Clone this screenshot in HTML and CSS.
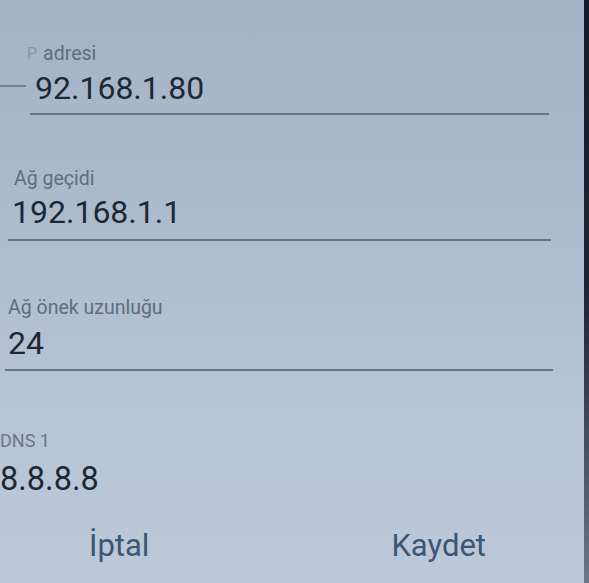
FILE: index.html
```html
<!DOCTYPE html>
<html lang="tr">
<head>
  <meta charset="UTF-8">
  <title>IP ayarları</title>
  <link rel="stylesheet" href="styles.css">
</head>
<body>
  <div class="screen">
    <div class="form">
      <!-- IP address -->
      <div class="field field-ip">
        <div class="label"><span class="cut">P</span><span>adresi</span></div>
        <div class="value">92.168.1.80</div>
      </div>

      <div class="field field-gw">
        <div class="label">Ağ geçidi</div>
        <div class="value">192.168.1.1</div>
      </div>

      <div class="field field-prefix">
        <div class="label">Ağ önek uzunluğu</div>
        <div class="value">24</div>
      </div>

      <div class="field field-dns">
        <div class="label">DNS 1</div>
        <div class="value">8.8.8.8</div>
      </div>
    </div>

    <div class="actions">
      <button class="btn btn-cancel">İptal</button>
      <button class="btn btn-save">Kaydet</button>
    </div>
  </div>
</body>
</html>
```

FILE: styles.css
```css
html, body {
  margin: 0;
  height: 100%;
}

body {
  font-family: Roboto, "Noto Sans", sans-serif;
  background: linear-gradient(180deg, #a3b2c5 0%, #adbccd 40%, #b8c5d6 75%, #bcc8d8 100%);
  overflow: hidden;
}

.screen {
  position: relative;
  height: 583px;
  box-sizing: border-box;
  padding-top: 43px;
}

/* dark bezel on the right edge */
.screen::after {
  content: "";
  position: absolute;
  top: 0;
  right: 0;
  width: 5px;
  height: 100%;
  background: linear-gradient(180deg, #151b28 0%, #1d2433 50%, #6c7788 100%);
}

.form {
  display: flex;
  flex-direction: column;
}

.field {
  position: relative;
  display: flex;
  flex-direction: column;
  border-bottom: 2px solid #687585;
  padding-bottom: 7px;
}

.label {
  display: flex;
  gap: 6px;
  font-size: 19.5px;
  line-height: 22px;
  color: #5f6d7e;
}

.label .cut {
  color: #8a97a6;
  font-size: 16px;
  margin-left: -3px;
}

.value {
  font-size: 32px;
  line-height: 36px;
  color: #1e2833;
  margin-top: 5px;
}

.field-ip {
  margin-left: 30px;
  width: 519px;
}

.field-ip .value {
  padding-left: 5px;
}

/* stray edge of the previous line, left of the first field */
.field-ip::before {
  content: "";
  position: absolute;
  left: -30px;
  top: 42px;
  width: 26px;
  height: 2px;
  background: #76838f;
}

.field-gw {
  margin-top: 53px;
  margin-left: 8px;
  width: 543px;
  padding-bottom: 9px;
}

.field-gw .label {
  padding-left: 6px;
}

.field-gw .value {
  padding-left: 4px;
  margin-top: 4px;
}

.field-prefix {
  margin-top: 56px;
  margin-left: 5px;
  width: 548px;
  padding-bottom: 8px;
}

.field-prefix .label,
.field-prefix .value {
  padding-left: 3px;
}

.field-prefix .value {
  margin-top: 6px;
}

.field-dns {
  margin-top: 59px;
  border-bottom: none;
}

.field-dns .label {
  font-size: 18px;
  color: #6a7888;
}

.field-dns .value {
  font-size: 32.5px;
  margin-top: 9px;
}

.actions {
  display: flex;
  margin-top: 25px;
}

.btn {
  background: none;
  border: none;
  padding: 0;
  font-family: inherit;
  font-size: 31px;
  line-height: 34px;
  color: #3c5673;
  cursor: pointer;
}

.btn-cancel {
  margin-left: 89px;
}

.btn-save {
  margin-left: auto;
  margin-right: 103px;
}
```
